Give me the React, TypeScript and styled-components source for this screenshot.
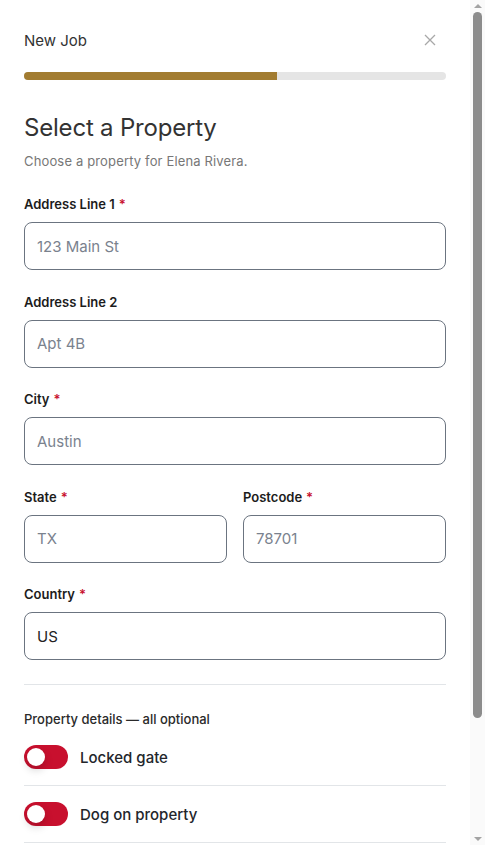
import React from "react";
import styled, { createGlobalStyle } from "styled-components";

const Global = createGlobalStyle`
  html, body { margin: 0; padding: 0; background: #ffffff; overflow: hidden; }
  body { font-family: Inter, "Noto Sans", sans-serif; color: #222; }
  * { box-sizing: border-box; }
`;

const Frame = styled.div`
  width: 485px;
  height: 845px;
  display: flex;
  background: #ffffff;
`;

const Scroller = styled.div`
  flex: 1;
  min-width: 0;
  height: 100%;
  overflow-y: auto;
  scrollbar-width: none;
  &::-webkit-scrollbar { display: none; }
`;

const ScrollTrack = styled.div`
  width: 15px;
  height: 100%;
  background: #fafafa;
  display: flex;
  flex-direction: column;
  align-items: center;
`;

const ArrowBox = styled.div`
  height: 12px;
  width: 100%;
  display: flex;
  align-items: center;
  justify-content: center;
`;

const Arrow = styled.div<{ $down?: boolean }>`
  width: 0;
  height: 0;
  border-left: 4px solid transparent;
  border-right: 4px solid transparent;
  ${(p) =>
    p.$down
      ? "border-top: 4px solid #a3a3a3;"
      : "border-bottom: 4px solid #a3a3a3;"}
`;

const ThumbArea = styled.div`
  flex: 1;
  width: 100%;
  display: flex;
  justify-content: center;
`;

const Thumb = styled.div`
  width: 9px;
  border-radius: 5px;
  background: #8c8c8c;
`;

const Content = styled.div`
  padding: 24px 24px 0 24px;
  display: flex;
  flex-direction: column;
`;

const Header = styled.div`
  height: 32px;
  display: flex;
  align-items: center;
  justify-content: space-between;
`;

const HeaderTitle = styled.div`
  font-size: 15px;
  color: #333;
  font-weight: 400;
`;

const CloseButton = styled.button`
  border: none;
  background: none;
  padding: 0;
  width: 24px;
  height: 24px;
  display: flex;
  align-items: center;
  justify-content: center;
  margin-right: 4px;
  cursor: pointer;
`;

const Progress = styled.div`
  margin-top: 16px;
  height: 8px;
  border-radius: 4px;
  background: #e5e5e5;
  overflow: hidden;
`;

const ProgressFill = styled.div`
  height: 100%;
  background: #a27c31;
`;

const Title = styled.h1`
  margin: 32px 0 0 0;
  font-size: 24px;
  line-height: 32px;
  font-weight: 400;
  color: #333;
  letter-spacing: -0.2px;
`;

const Subtitle = styled.p`
  margin: 7px 0 0 0;
  font-size: 13px;
  line-height: 20px;
  color: #777;
  letter-spacing: 0.15px;
`;

const Fields = styled.div`
  margin-top: 23px;
  display: flex;
  flex-direction: column;
  gap: 21.5px;
`;

const Row = styled.div`
  display: grid;
  grid-template-columns: 1fr 1fr;
  gap: 16px;
`;

const Field = styled.div`
  display: flex;
  flex-direction: column;
  gap: 8px;
`;

const Label = styled.label`
  font-size: 13px;
  line-height: 20px;
  font-weight: 600;
  color: #1c1c1c;
`;

const Req = styled.span`
  color: #c8102e;
  margin-left: 4px;
`;

const Input = styled.input`
  height: 48px;
  width: 100%;
  border: 1px solid #6b7480;
  border-radius: 8px;
  padding: 0 12px;
  font-family: inherit;
  font-size: 15px;
  color: #222;
  background: #fff;
  outline: none;
  &::placeholder { color: #7a828e; }
`;

const Divider = styled.hr`
  border: none;
  border-top: 1px solid #e2e5e8;
  margin: 24px 0 0 0;
`;

const SectionLabel = styled.div`
  margin-top: 24px;
  font-size: 13px;
  line-height: 20px;
  font-weight: 500;
  color: #2a2a2a;
`;

const ToggleRow = styled.div`
  display: flex;
  align-items: center;
  gap: 12px;
  padding: 16px 0;
  border-bottom: 1px solid #e2e5e8;
`;

const Toggle = styled.button<{ $on?: boolean }>`
  position: relative;
  width: 44px;
  height: 24px;
  border-radius: 12px;
  border: none;
  padding: 0;
  background: #c8102e;
  flex-shrink: 0;
  cursor: pointer;
  &::after {
    content: "";
    position: absolute;
    top: 3px;
    left: ${(p) => (p.$on ? "23px" : "3px")};
    width: 18px;
    height: 18px;
    border-radius: 50%;
    background: #fff;
    box-shadow: 0 4px 8px rgba(0, 0, 0, 0.18);
  }
`;

const ToggleText = styled.span`
  font-size: 15px;
  font-weight: 500;
  color: #23262b;
`;

export default function App() {
  const progress = 60;
  const thumbHeight = 706;
  return (
    <>
      <Global />
      <Frame>
        <Scroller>
          <Content>
            <Header>
              <HeaderTitle>New Job</HeaderTitle>
              <CloseButton aria-label="Close">
                <svg width="12" height="12" viewBox="0 0 12 12">
                  <path d="M1 1L11 11M11 1L1 11" stroke="#a8a8a8" strokeWidth="1.3" fill="none" />
                </svg>
              </CloseButton>
            </Header>
            <Progress>
              <ProgressFill style={{ width: `${progress}%` }} />
            </Progress>
            <Title>Select a Property</Title>
            <Subtitle>Choose a property for Elena Rivera.</Subtitle>
            <Fields>
              <Field>
                <Label>Address Line 1<Req>*</Req></Label>
                <Input placeholder="123 Main St" />
              </Field>
              <Field>
                <Label>Address Line 2</Label>
                <Input placeholder="Apt 4B" />
              </Field>
              <Field>
                <Label>City<Req>*</Req></Label>
                <Input placeholder="Austin" />
              </Field>
              <Row>
                <Field>
                  <Label>State<Req>*</Req></Label>
                  <Input placeholder="TX" />
                </Field>
                <Field>
                  <Label>Postcode<Req>*</Req></Label>
                  <Input placeholder="78701" />
                </Field>
              </Row>
              <Field>
                <Label>Country<Req>*</Req></Label>
                <Input defaultValue="US" />
              </Field>
            </Fields>
            <Divider />
            <SectionLabel>Property details — all optional</SectionLabel>
            <ToggleRow>
              <Toggle aria-label="Locked gate" />
              <ToggleText>Locked gate</ToggleText>
            </ToggleRow>
            <ToggleRow>
              <Toggle aria-label="Dog on property" />
              <ToggleText>Dog on property</ToggleText>
            </ToggleRow>
          </Content>
        </Scroller>
        <ScrollTrack aria-hidden="true">
          <ArrowBox><Arrow /></ArrowBox>
          <ThumbArea>
            <Thumb style={{ height: thumbHeight }} />
          </ThumbArea>
          <ArrowBox><Arrow $down /></ArrowBox>
        </ScrollTrack>
      </Frame>
    </>
  );
}
